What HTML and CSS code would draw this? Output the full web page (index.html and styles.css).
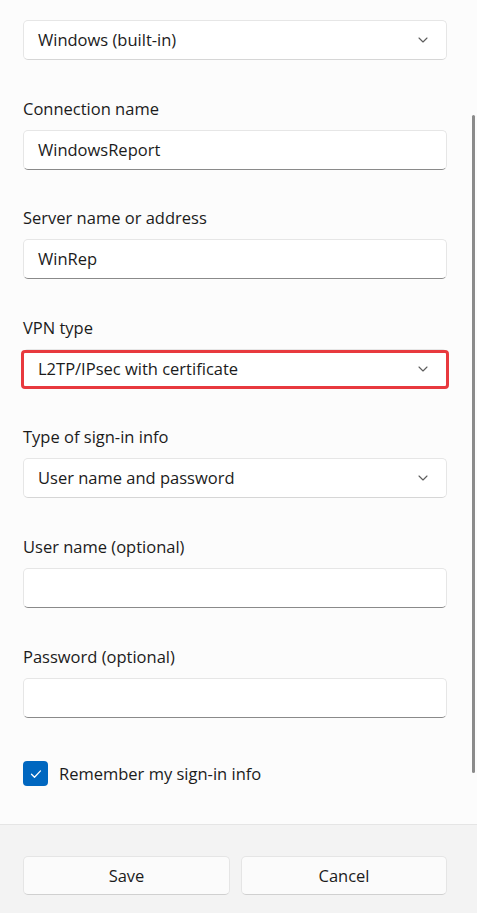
FILE: index.html
```html
<!DOCTYPE html>
<html lang="en">
<head>
<meta charset="utf-8">
<title>Add a VPN connection</title>
<link rel="stylesheet" href="styles.css">
</head>
<body>
<div class="dialog">
  <div class="content">
    <div class="field first">
      <div class="select"><span>Windows (built-in)</span>
        <svg class="chev" width="10" height="6" viewBox="0 0 10 6"><path d="M1 1l4 4 4-4" fill="none" stroke="#5d5d5d" stroke-width="1.1" stroke-linecap="round" stroke-linejoin="round"/></svg>
      </div>
    </div>
    <div class="field">
      <label class="label">Connection name</label>
      <div class="input"><span>WindowsReport</span></div>
    </div>
    <div class="field">
      <label class="label">Server name or address</label>
      <div class="input"><span>WinRep</span></div>
    </div>
    <div class="field">
      <label class="label">VPN type</label>
      <div class="select highlighted"><span>L2TP/IPsec with certificate</span>
        <svg class="chev" width="10" height="6" viewBox="0 0 10 6"><path d="M1 1l4 4 4-4" fill="none" stroke="#5d5d5d" stroke-width="1.1" stroke-linecap="round" stroke-linejoin="round"/></svg>
      </div>
    </div>
    <div class="field">
      <label class="label">Type of sign-in info</label>
      <div class="select"><span>User name and password</span>
        <svg class="chev" width="10" height="6" viewBox="0 0 10 6"><path d="M1 1l4 4 4-4" fill="none" stroke="#5d5d5d" stroke-width="1.1" stroke-linecap="round" stroke-linejoin="round"/></svg>
      </div>
    </div>
    <div class="field">
      <label class="label">User name (optional)</label>
      <div class="input"></div>
    </div>
    <div class="field">
      <label class="label">Password (optional)</label>
      <div class="input"></div>
    </div>
    <div class="check-row">
      <span class="checkbox">
        <svg width="14" height="14" viewBox="0 0 14 14"><path d="M2.5 7.3l3 3 6-6.4" fill="none" stroke="#fff" stroke-width="1.3" stroke-linecap="round" stroke-linejoin="round"/></svg>
      </span>
      <span class="check-label">Remember my sign-in info</span>
    </div>
    <div class="scrollbar"></div>
  </div>
  <div class="footer">
    <button class="btn">Save</button>
    <button class="btn">Cancel</button>
  </div>
</div>
</body>
</html>
```

FILE: styles.css
```css
* { box-sizing: border-box; }
html, body {
  margin: 0;
  padding: 0;
  width: 477px;
  height: 913px;
  overflow: hidden;
}
body {
  font-family: "Open Sans", "Noto Sans", sans-serif;
  font-size: 16.5px;
  color: #1b1b1b;
  background: #fcfcfc;
}
.dialog {
  display: flex;
  flex-direction: column;
  height: 913px;
}
.content {
  position: relative;
  flex: 1;
  padding: 20px 30px 0 23px;
  display: flex;
  flex-direction: column;
  gap: 36.6px;
}
.field {
  display: flex;
  flex-direction: column;
  gap: 9px;
  width: 424px;
}
.label {
  height: 24px;
  line-height: 24px;
  display: block;
}
.input, .select {
  position: relative;
  height: 40px;
  background: #ffffff;
  border: 1px solid #e6e6e6;
  border-radius: 5px;
  display: flex;
  align-items: center;
  padding: 0 18px 0 14px;
  line-height: 24px;
}
.input {
  border-bottom: 1px solid #8a8a8a;
}
.select {
  justify-content: space-between;
  border-bottom-color: #d6d6d6;
}
.chev { display: block; }
.highlighted::after {
  content: "";
  position: absolute;
  left: -3px;
  right: -3px;
  top: 0;
  bottom: -1px;
  border: 3px solid #e8393e;
  border-radius: 4px;
}
.check-row {
  display: flex;
  align-items: center;
  gap: 11px;
  margin-top: 7px;
  height: 25px;
}
.checkbox {
  width: 25px;
  height: 25px;
  border-radius: 4px;
  background: #0067c0;
  display: flex;
  align-items: center;
  justify-content: center;
}
.checkbox svg { display: block; }
.check-label { line-height: 24px; }
.scrollbar {
  position: absolute;
  left: 472px;
  top: 115px;
  width: 3px;
  height: 658px;
  border-radius: 2px;
  background: #8b8b8b;
}
.footer {
  height: 89px;
  background: #f3f3f3;
  border-top: 1px solid #e5e5e5;
  display: flex;
  gap: 11px;
  padding: 31px 30px 0 23px;
}
.btn {
  width: 207px;
  height: 39px;
  background: #fbfbfb;
  border: 1px solid #e5e5e5;
  border-bottom-color: #d0d0d0;
  border-radius: 5px;
  font-family: inherit;
  font-size: 16.5px;
  color: #1b1b1b;
  padding: 0;
}
.btn + .btn { width: 206px; }
```
